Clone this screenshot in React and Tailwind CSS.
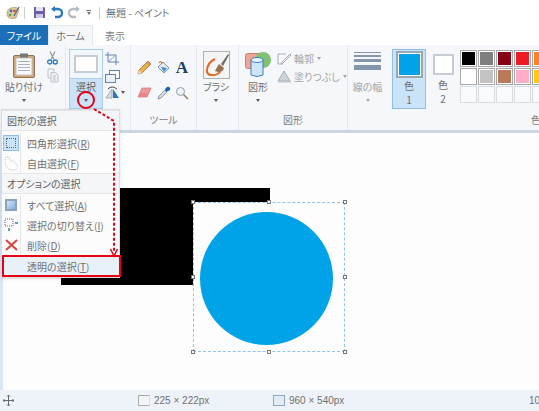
function Caret({ className = "" }) {
  return <span className={"block w-0 h-0 border-x-[2.5px] border-x-transparent border-t-[3px] border-t-[#555] " + className}></span>;
}

function GroupLabel({ children }) {
  return <div className="h-[21px] flex items-center justify-center text-[10px] leading-[14px] text-[#808080] whitespace-nowrap">{children}</div>;
}

function PasteIcon() {
  return (
    <svg width="22" height="25" viewBox="0 0 22 25">
      <rect x="0.5" y="2.5" width="21" height="22" rx="1.5" fill="#cfa57a" stroke="#94714d" />
      <rect x="3" y="5" width="16" height="17" fill="#fbfbfb" stroke="#c2c2c2" />
      <path d="M5 8.5h12M5 11.5h12M5 14.5h12M5 17.5h12" stroke="#a9b4c2" />
      <rect x="7" y="0.5" width="8" height="4" fill="#787878" />
    </svg>
  );
}

function Scissors() {
  return (
    <svg width="11" height="14" viewBox="0 0 11 14" fill="none">
      <path d="M3 0.5 L7 8.5 M8 0.5 L4 8.5" stroke="#8391a0" strokeWidth="1.1" />
      <circle cx="2.7" cy="11" r="2" stroke="#2b78c2" strokeWidth="1.3" />
      <circle cx="8.3" cy="11" r="2" stroke="#2b78c2" strokeWidth="1.3" />
    </svg>
  );
}

function CopyIcon() {
  return (
    <svg width="12" height="15" viewBox="0 0 12 15" fill="none" stroke="#bcc3ca">
      <path d="M1 1h6v9H1z" fill="#f2f4f6" />
      <path d="M4 4.5h4.5L11 7v7H4z" fill="#eef0f2" />
      <path d="M6 8h3M6 10h3M6 12h3" />
    </svg>
  );
}

function ImageTools() {
  return (
    <div className="flex flex-col pt-[3px]">
      <svg width="14" height="13" viewBox="0 0 14 13" fill="none" stroke="#6485ab">
        <path d="M3 0v10h11M0 3h11v10" />
        <path d="M3 10L11 3" stroke="#8aa4c0" />
      </svg>
      <svg className="mt-[5px]" width="15" height="13" viewBox="0 0 15 13" fill="none" stroke="#6485ab">
        <rect x="4.5" y="0.5" width="10" height="8" fill="#fff" />
        <rect x="0.5" y="4.5" width="10" height="8" fill="#e8f0f8" />
      </svg>
      <div className="flex items-center gap-[1px] mt-[3px]">
        <svg width="15" height="13" viewBox="0 0 15 13">
          <path d="M1 12L7 3v9z" fill="#d6dce2" stroke="#a5afb9" />
          <path d="M8 12V3l6 9z" fill="#2b78c2" />
          <path d="M3 3q4-4 9 0" fill="none" stroke="#444" />
        </svg>
        <Caret />
      </div>
    </div>
  );
}

function Pencil() {
  return (
    <svg width="15" height="15" viewBox="0 0 15 15">
      <path d="M11 1l3 3-9 9-4 1 1-4z" fill="#e9b04d" stroke="#a67a2c" strokeWidth="0.8" />
      <path d="M1 14l1-4 3 3z" fill="#f3dfc0" />
      <path d="M11 1l3 3-1.5 1.5-3-3z" fill="#d98c78" />
    </svg>
  );
}

function Fill() {
  return (
    <svg width="16" height="15" viewBox="0 0 16 15">
      <path d="M7 2l6 6-5 5-6-6z" fill="#e3e9f0" stroke="#8a97a4" />
      <path d="M5 7l6 1-3 4z" fill="#3a8edb" />
      <path d="M3 3q2-3 3 1" fill="none" stroke="#c9784a" strokeWidth="1.2" />
    </svg>
  );
}

function Eraser() {
  return (
    <svg width="15" height="12" viewBox="0 0 15 12">
      <path d="M5 1h9l-4 9H1z" fill="#f0989b" stroke="#cf7376" strokeWidth="0.7" />
      <path d="M1 10l2-4h9l-2 4z" fill="#e9858a" />
    </svg>
  );
}

function Dropper() {
  return (
    <svg width="14" height="14" viewBox="0 0 14 14">
      <path d="M1 13l1-3 6-6 2 2-6 6z" fill="#d5dde6" stroke="#6d7986" strokeWidth="0.7" />
      <path d="M8 3l2-2q2-1 3 1t-2 3l-2 1z" fill="#1f5f9e" />
    </svg>
  );
}

function Magnifier() {
  return (
    <svg width="14" height="14" viewBox="0 0 14 14" fill="none">
      <circle cx="5.5" cy="5.5" r="4" fill="#eef4fa" stroke="#8f9eae" />
      <path d="M8.5 8.5L13 13" stroke="#9a8160" strokeWidth="1.6" />
    </svg>
  );
}

function BrushIcon() {
  return (
    <svg width="27" height="28" viewBox="0 0 27 28">
      <rect x="0.5" y="0.5" width="26" height="27" fill="#f4f4f4" stroke="#b0b0b0" />
      <path d="M4 18q-1 6 5 6t8-3" fill="none" stroke="#e0672b" strokeWidth="2" />
      <path d="M4 19q1-8 8-11" fill="none" stroke="#e0672b" strokeWidth="2" />
      <path d="M12 20l4-7 5 4q-2 6-9 3z" fill="#96714b" />
      <path d="M18 13l7-10 1 1-6 11z" fill="#6d6d6d" />
    </svg>
  );
}

function ShapesIcon() {
  return (
    <svg width="26" height="28" viewBox="0 0 26 28">
      <rect x="0.5" y="2.5" width="15" height="15" rx="2" fill="#f0a594" stroke="#cd7f6e" />
      <circle cx="18" cy="9" r="8" fill="#82c072" />
      <path d="M6 9h12v15q-6 3-12 0z" fill="#cde5f7" stroke="#3c7fbd" />
      <ellipse cx="12" cy="9" rx="6" ry="2.5" fill="#e8f4fd" stroke="#3c7fbd" />
    </svg>
  );
}

function OutlineIcon() {
  return (
    <svg width="15" height="13" viewBox="0 0 15 13" fill="none" stroke="#a5adb6">
      <path d="M1 2h8M1 2v10h5" />
      <path d="M4 11L13 2l1 1-9 9z" fill="#f4f6f8" />
    </svg>
  );
}

function FillShapeIcon() {
  return (
    <svg width="15" height="13" viewBox="0 0 15 13">
      <path d="M7 1l6 10H1z" fill="#cdd3da" stroke="#a5adb6" />
      <path d="M1 11h13v1.5H1z" fill="#bcc6d1" />
    </svg>
  );
}

function LineWidthIcon() {
  return (
    <div className="w-[27px] h-[28px] flex flex-col gap-[2px] pt-[1px]">
      <div className="h-[1px] bg-[#8496ae]"></div>
      <div className="h-[2px] bg-[#8496ae]"></div>
      <div className="h-[3px] bg-[#8496ae]"></div>
      <div className="h-[5px] bg-[#8496ae] mt-[1px]"></div>
    </div>
  );
}

const palette = [
  "#000000", "#7f7f7f", "#880015", "#ed1c24", "#ff7f27",
  "#ffffff", "#c3c3c3", "#b97a57", "#ffaec9", "#ffc90e",
  "", "", "", "", "",
];

function Ribbon() {
  return (
    <div className="h-[85px] bg-[#f5f7fa] flex">
      {/* クリップボード */}
      <div className="w-[66px] border-r border-[#e4e8ec] flex pt-[6px] pl-[7px]">
        <div className="w-[34px] flex flex-col items-center text-[10px] text-[#707070] whitespace-nowrap">
          <div className="h-[25px] mt-[2px]"><PasteIcon /></div>
          <div className="leading-[14px] mt-[2px]">貼り付け</div>
          <Caret className="mt-[5px]" />
        </div>
        <div className="flex flex-col gap-[3px] pl-[6px]">
          <Scissors />
          <CopyIcon />
        </div>
      </div>
      {/* イメージ */}
      <div className="w-[65px] border-r border-[#e4e8ec] flex gap-[2px] pt-[4px] pl-[3px]">
        <div className="w-[34px] h-[60px] flex flex-col">
          <div className="h-[30px] border border-[#a9cdec] bg-[#f2f7fc] flex items-center justify-center">
            <div className="w-[24px] h-[18px] border-2 border-[#c5ccd4] bg-white"></div>
          </div>
          <div className="h-[30px] border border-t-0 border-[#a9cdec] bg-[#cbe3f8] flex flex-col items-center text-[10px] text-[#606060]">
            <div className="leading-[14px] mt-[1px]">選択</div>
            <Caret className="mt-[5px]" />
          </div>
        </div>
        <ImageTools />
      </div>
      {/* ツール */}
      <div className="w-[66px] border-r border-[#e4e8ec] flex flex-col">
        <div className="flex-1 grid grid-cols-[21px_18px_18px] grid-rows-[26px_26px] justify-items-center items-center content-start pt-[9px] pl-[3px]">
          <Pencil />
          <Fill />
          <span className="text-[17px] font-bold leading-none text-[#1f3f66]" style={{ fontFamily: "'Liberation Serif', serif" }}>A</span>
          <Eraser />
          <Dropper />
          <Magnifier />
        </div>
        <GroupLabel>ツール</GroupLabel>
      </div>
      {/* ブラシ */}
      <div className="w-[42px] border-r border-[#e4e8ec] flex flex-col items-center pt-[6px] pr-[3px] text-[10px] text-[#707070] whitespace-nowrap">
        <BrushIcon />
        <div className="leading-[14px] mt-[1px]">ブラシ</div>
        <Caret className="mt-[5px]" />
      </div>
      {/* 図形 */}
      <div className="w-[109px] border-r border-[#e4e8ec] flex flex-col">
        <div className="flex-1 flex">
          <div className="w-[38px] flex flex-col items-center pt-[6px] text-[10px] text-[#707070]">
            <ShapesIcon />
            <div className="leading-[14px] mt-[1px]">図形</div>
            <Caret className="mt-[5px]" />
          </div>
          <div className="flex flex-col gap-[5px] pt-[7px] text-[10px] leading-[13px] text-[#a5a5a5] whitespace-nowrap">
            <div className="flex items-center gap-[2px]"><OutlineIcon /><span>輪郭</span><Caret className="border-t-[#a5a5a5] ml-[1px]" /></div>
            <div className="flex items-center gap-[2px]"><FillShapeIcon /><span>塗りつぶし</span><Caret className="border-t-[#a5a5a5] ml-[1px]" /></div>
          </div>
        </div>
        <GroupLabel>図形</GroupLabel>
      </div>
      {/* 線の幅 */}
      <div className="w-[43px] flex flex-col items-center pt-[6px] pr-[4px] text-[10px] text-[#a5a5a5] whitespace-nowrap">
        <LineWidthIcon />
        <div className="leading-[14px] mt-[1px]">線の幅</div>
        <Caret className="mt-[5px] border-t-[#a5a5a5]" />
      </div>
      {/* 色 */}
      <div className="flex-1 flex pt-[4px] pl-[1px] overflow-hidden">
        <div className="w-[34px] h-[60px] shrink-0 border border-[#8fbde6] bg-[#cbe3f8] flex flex-col items-center text-[10px] leading-[14px] text-[#707070]">
          <div className="w-[27px] h-[27px] mt-[1px] mb-[1px] border-2 border-[#9ba6b1] p-[1px] bg-white">
            <div className="w-full h-full bg-[#00a2e8]"></div>
          </div>
          <div>色</div>
          <div>1</div>
        </div>
        <div className="w-[34px] h-[60px] shrink-0 flex flex-col items-center text-[10px] leading-[14px] text-[#707070]">
          <div className="w-[21px] h-[21px] mt-[5px] mb-[3px] border-2 border-[#c5ccd4] bg-white"></div>
          <div>色</div>
          <div>2</div>
        </div>
        <div className="grid grid-cols-[repeat(5,17px)] auto-rows-[17px] gap-[1px] mt-[1px] h-[53px] shrink-0">
          {palette.map((c, i) => (
            <div key={i} className={c ? "border border-[#a9a9a9] p-[1px] bg-white" : "border border-[#d8dde2] bg-[#f9fafb]"}>
              {c && <div className="w-full h-full" style={{ backgroundColor: c }}></div>}
            </div>
          ))}
        </div>
      </div>
    </div>
  );
}

function MenuHeader({ children }) {
  return <div className="h-[21px] px-[5px] bg-[#f4f6f8] border-y border-[#e6e6e6] flex items-center text-[10px] text-[#606060] whitespace-nowrap">{children}</div>;
}

function MenuItem({ icon, children }) {
  return (
    <div className="h-[20px] flex items-center text-[10px] text-[#707070]">
      <div className="w-[19px] h-full flex items-center justify-center shrink-0 border-r border-[#e6e6e6]">{icon}</div>
      <div className="pl-[6px] whitespace-nowrap">{children}</div>
    </div>
  );
}

function SelectMenu() {
  return (
    <div className="absolute left-[1px] top-[109px] w-[119px] bg-[#fcfcfc] border border-[#dcdcdc] shadow-sm">
      <MenuHeader>図形の選択</MenuHeader>
      <div className="h-[2px]"></div>
      <MenuItem icon={<div className="w-[16px] h-[16px] bg-[#cbe3f8] border border-[#8fbde6] flex items-center justify-center"><div className="w-[10px] h-[10px] border border-dotted border-[#4a6d91]"></div></div>}>
        四角形選択(<u>R</u>)
      </MenuItem>
      <MenuItem icon={<svg width="14" height="15" viewBox="0 0 14 15" fill="none" stroke="#a9bccf" strokeDasharray="1 1"><path d="M2 1q-2 5 0 9t8 4 3-5-5-4-3-4z" /></svg>}>
        自由選択(<u>F</u>)
      </MenuItem>
      <MenuHeader>オプションの選択</MenuHeader>
      <div className="h-[1px]"></div>
      <MenuItem icon={<div className="w-[12px] h-[12px] bg-gradient-to-br from-[#d5e6f6] to-[#7db1e0] border-2 border-[#8ba3bb]"></div>}>
        すべて選択(<u>A</u>)
      </MenuItem>
      <MenuItem icon={<svg width="14" height="14" viewBox="0 0 14 14" fill="none"><path d="M1 1h8v7H1z" stroke="#4a6d91" strokeDasharray="1 1" /><path d="M5 10v3M11 5h3" stroke="#2b78c2" strokeWidth="1.4" /></svg>}>
        選択の切り替え(<u>I</u>)
      </MenuItem>
      <MenuItem icon={<svg width="13" height="12" viewBox="0 0 13 12" fill="none" stroke="#d8433a" strokeWidth="2"><path d="M1 1l11 10M12 1L1 11" /></svg>}>
        削除(<u>D</u>)
      </MenuItem>
      <div className="h-[22px] mr-[-2px] bg-[#e8f1fa] border-2 border-[#e60012] flex items-center pl-[23px] text-[10px] text-[#707070] whitespace-nowrap">
        <span>透明の選択(<u>T</u>)</span>
      </div>
    </div>
  );
}

function Handle({ className }) {
  return <div className={"absolute w-[4px] h-[4px] bg-white border border-[#777] " + className}></div>;
}

function Canvas() {
  return (
    <div className="relative flex-1 bg-[#fdfdfd] border-l-[3px] border-l-[#d9e6f3] border-t-[3px] border-t-[#cbd6e3]">
      <div className="absolute left-[58px] top-[55px] w-[209px] h-[97px] bg-black"></div>
      <div className="absolute left-[190px] top-[69px] w-[152px] h-[150px] bg-[#fdfdfd] border border-dashed border-[#8cc4ec] flex items-center justify-center pr-[5px] pt-[2px]">
        <div className="w-[133px] h-[133px] rounded-full bg-[#00a2e8] shrink-0"></div>
        <Handle className="left-[-3px] top-[-3px]" />
        <Handle className="left-[73px] top-[-3px]" />
        <Handle className="right-[-3px] top-[-3px]" />
        <Handle className="left-[-3px] top-[72px]" />
        <Handle className="right-[-3px] top-[72px]" />
        <Handle className="left-[-3px] bottom-[-3px]" />
        <Handle className="left-[73px] bottom-[-3px]" />
        <Handle className="right-[-3px] bottom-[-3px]" />
      </div>
    </div>
  );
}

function StatusBar() {
  return (
    <div className="h-[21px] bg-[#eef3fa] flex items-center text-[10px] text-[#707070] overflow-hidden" style={{ fontFamily: "'Liberation Sans', sans-serif" }}>
      <div className="w-[138px] pl-[3px] shrink-0">
        <svg width="11" height="11" viewBox="0 0 11 11" fill="none" stroke="#667">
          <path d="M5.5 0v11M0 5.5h11M4 1.5l1.5-1.5 1.5 1.5M4 9.5l1.5 1.5 1.5-1.5M1.5 4L0 5.5 1.5 7M9.5 4L11 5.5 9.500 7" />
        </svg>
      </div>
      <div className="w-[135px] flex items-center gap-[4px] shrink-0">
        <div className="w-[12px] h-[11px] border border-[#aaa] border-r-[#ddd] bg-[#f2f4f7]"></div>
        <span>225 × 222px</span>
      </div>
      <div className="w-[256px] flex items-center gap-[4px] shrink-0">
        <div className="w-[12px] h-[11px] border border-[#8fa5bb] bg-[#e1ecf7]"></div>
        <span>960 × 540px</span>
      </div>
      <span className="shrink-0">100%</span>
    </div>
  );
}

export default function App() {
  return (
    <div className="relative w-[539px] h-[411px] overflow-hidden flex flex-col bg-white [font-feature-settings:'palt']" style={{ fontFamily: "'Noto Sans CJK JP', 'Liberation Sans', sans-serif" }}>
      {/* タイトルバー */}
      <div className="h-[25px] flex items-center pl-[6px] shrink-0">
        <svg width="14" height="14" viewBox="0 0 14 14">
          <path d="M2 11q-3-7 3-9t8 2l-3 8q-5 2-8-1z" fill="#e0c89a" stroke="#9a8a6a" strokeWidth="0.6" />
          <circle cx="5" cy="5" r="1.4" fill="#2b78c2" />
          <circle cx="8.5" cy="5" r="1.3" fill="#d8433a" />
          <circle cx="4" cy="9" r="1.3" fill="#4caf50" />
          <path d="M8 10l5-9" stroke="#5a6f85" strokeWidth="1.4" />
        </svg>
        <div className="w-[1px] h-[12px] bg-[#ccc] ml-[4px]"></div>
        <svg className="ml-[8px]" width="13" height="13" viewBox="0 0 13 13">
          <path d="M1 1h10l1 1v10H1z" fill="#6f5fa8" />
          <rect x="3" y="1" width="7" height="4" fill="#e6e3f0" />
          <rect x="3" y="8" width="7" height="4" fill="#cfcbe2" />
        </svg>
        <svg className="ml-[5px]" width="12" height="13" viewBox="0 0 12 13" fill="none">
          <path d="M2 3h5a3.5 3.5 0 0 1 0 8H4" stroke="#2b78c2" strokeWidth="2.4" />
          <path d="M0 3l4-3v6z" fill="#2b78c2" />
        </svg>
        <svg className="ml-[5px]" width="12" height="13" viewBox="0 0 12 13" fill="none">
          <path d="M10 3H5a3.5 3.5 0 0 0 0 8h3" stroke="#b4bcc5" strokeWidth="2.4" />
          <path d="M12 3L8 0v6z" fill="#b4bcc5" />
        </svg>
        <div className="ml-[6px] flex flex-col items-center gap-[1px]">
          <div className="w-[5px] h-[1px] bg-[#777]"></div>
          <Caret className="border-t-[#777]" />
        </div>
        <div className="w-[1px] h-[12px] bg-[#ccc] ml-[8px]"></div>
        <span className="ml-[6px] text-[10px] text-[#707070]">無題 - ペイント</span>
      </div>
      {/* タブ */}
      <div className="h-[20px] flex items-stretch text-[10px] shrink-0">
        <div className="w-[48px] bg-[#1b6fb9] text-white flex items-center justify-center">ファイル</div>
        <div className="w-[45px] bg-[#f5f7fa] border-x border-t border-[#e4e8ec] text-[#707070] flex items-center justify-center">ホーム</div>
        <div className="w-[44px] text-[#808080] flex items-center justify-center">表示</div>
      </div>
      <Ribbon />
      <Canvas />
      <StatusBar />
      <SelectMenu />
      {/* 画面の右端で切れている見出し */}
      <div className="absolute left-[531px] top-[113px] text-[10px] leading-[14px] text-[#808080] whitespace-nowrap">色の編集</div>
      {/* 注釈 */}
      <svg className="absolute left-0 top-0 pointer-events-none" width="539" height="411" fill="none">
        <circle cx="86" cy="100" r="8" stroke="#e60012" strokeWidth="2" />
        <path d="M94 109L114 121V252" stroke="#e60012" strokeWidth="2" strokeDasharray="3 2" />
        <path d="M110.500 249l3.500 7 3.500-7" stroke="#e60012" strokeWidth="1.500" />
      </svg>
    </div>
  );
}
